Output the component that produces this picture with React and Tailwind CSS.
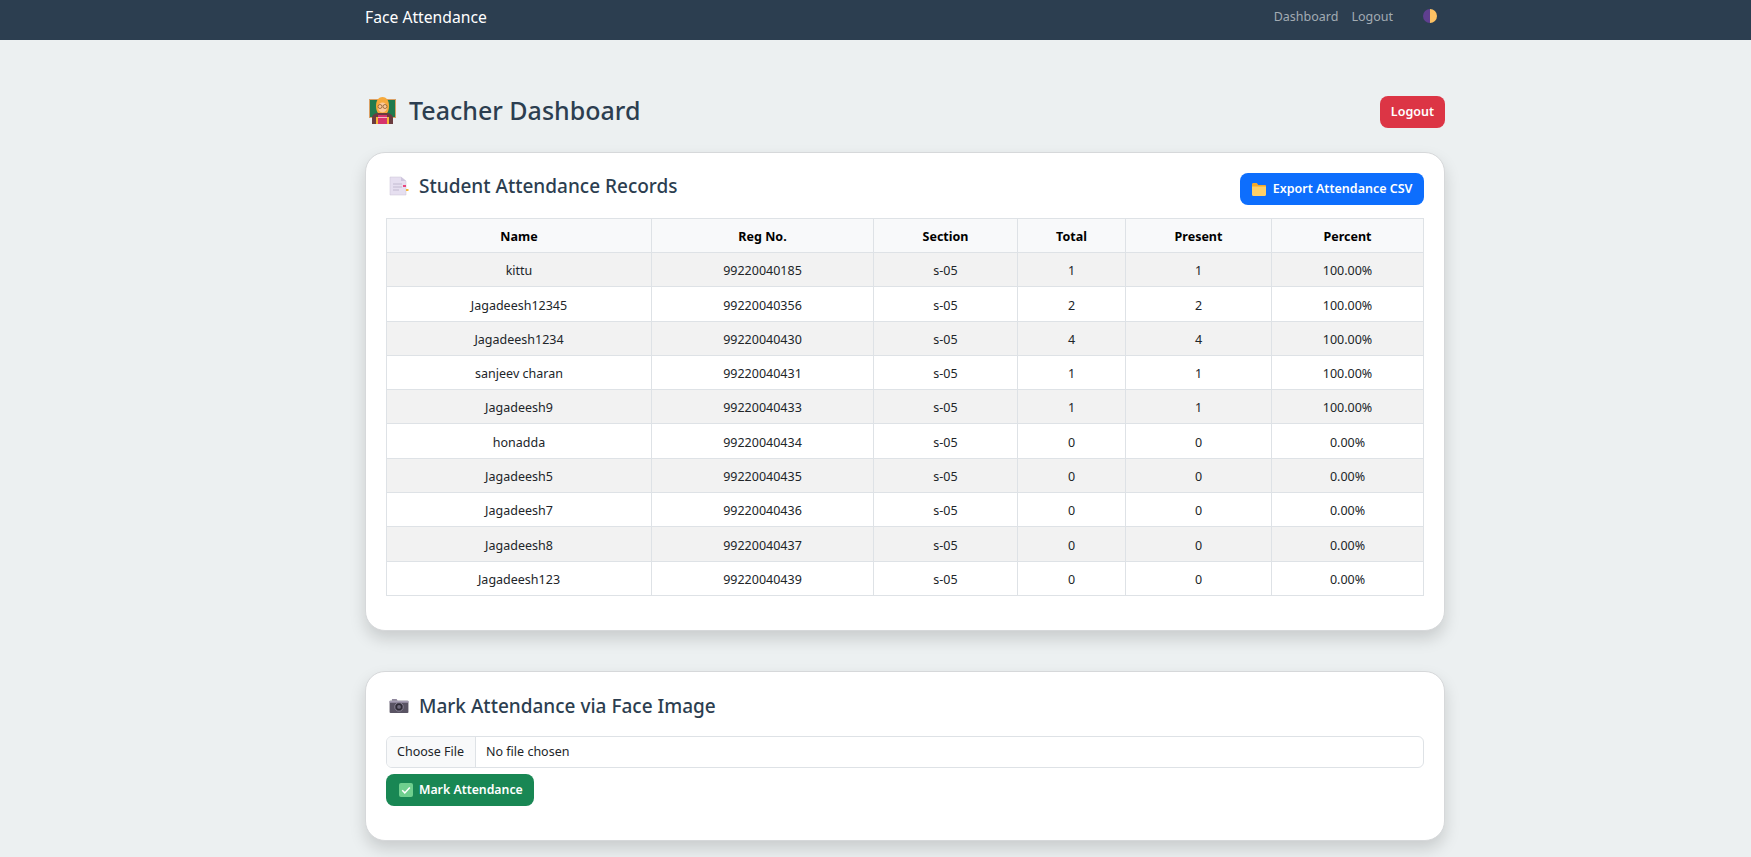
const rows = [
  ["kittu", "99220040185", "s-05", 1, 1, "100.00%"],
  ["Jagadeesh12345", "99220040356", "s-05", 2, 2, "100.00%"],
  ["Jagadeesh1234", "99220040430", "s-05", 4, 4, "100.00%"],
  ["sanjeev charan", "99220040431", "s-05", 1, 1, "100.00%"],
  ["Jagadeesh9", "99220040433", "s-05", 1, 1, "100.00%"],
  ["honadda", "99220040434", "s-05", 0, 0, "0.00%"],
  ["Jagadeesh5", "99220040435", "s-05", 0, 0, "0.00%"],
  ["Jagadeesh7", "99220040436", "s-05", 0, 0, "0.00%"],
  ["Jagadeesh8", "99220040437", "s-05", 0, 0, "0.00%"],
  ["Jagadeesh123", "99220040439", "s-05", 0, 0, "0.00%"],
];

const headers = ["Name", "Reg No.", "Section", "Total", "Present", "Percent"];

function TeacherIcon() {
  return (
    <svg width="27" height="27" viewBox="0 0 27 27" className="shrink-0">
      <rect x="0" y="2" width="27" height="19" fill="#d9a066" />
      <rect x="1" y="3" width="25" height="17" fill="#1f7a4d" />
      <path d="M3 27v-6c0-3 3-5 7-5h7c4 0 7 2 7 5v6z" fill="#6a3b3f" />
      <path d="M7 20h13v7H7z" fill="#f9b233" />
      <path d="M9 18h9v9H9z" fill="#d6336c" />
      <path d="M9 20h9v1H9z" fill="#f3b5c8" />
      <path d="M7 9c0-6 3-9 6.500-9S20 3 20 9c0 3-1 6-2 7H9c-1-1-2-4-2-7z" fill="#f6a93b" />
      <ellipse cx="13.500" cy="10.500" rx="4.500" ry="5" fill="#fbc99a" />
      <circle cx="11" cy="9.500" r="2" fill="none" stroke="#8a5a2b" strokeWidth="0.800" />
      <circle cx="16" cy="9.500" r="2" fill="none" stroke="#8a5a2b" strokeWidth="0.800" />
    </svg>
  );
}

function NotesIcon() {
  return (
    <svg width="20" height="20" viewBox="0 0 20 20" className="shrink-0">
      <path d="M1 1h11l5 4v14H1z" fill="#e6dff0" stroke="#c9c2d6" strokeWidth="0.500" />
      <path d="M12 1l5 4h-5z" fill="#cfc6de" />
      <path d="M4 8h9M4 11h9M4 14h6" stroke="#c2bad0" strokeWidth="1" />
      <rect x="14" y="9" width="3" height="2" fill="#e8467c" />
      <rect x="17" y="13" width="2.500" height="2" fill="#f5b83d" />
    </svg>
  );
}

function FolderIcon() {
  return (
    <svg width="14" height="13" viewBox="0 0 14 13" className="shrink-0">
      <path d="M0 1.500C0 .7.500 0 1.300 0h3.500l1.500 2H13c.6 0 1 .4 1 1v2H0z" fill="#f4a92b" />
      <path d="M0 3.500h14v8.300c0 .7-.5 1.200-1.200 1.200H1.200C.5 13 0 12.500 0 11.800z" fill="#ffd067" />
    </svg>
  );
}

function CameraIcon() {
  return (
    <svg width="20" height="16" viewBox="0 0 21 17" className="shrink-0">
      <path d="M3 1h5l1 2H3z" fill="#8f879c" />
      <rect x="0.500" y="3" width="20" height="13" rx="1" fill="#5a5464" />
      <rect x="0.500" y="3" width="20" height="2" fill="#a49cb2" />
      <circle cx="10.500" cy="9.500" r="4.500" fill="#2e2a35" stroke="#8f879c" strokeWidth="1" />
      <circle cx="10.500" cy="9.500" r="2" fill="#6f6a7c" />
    </svg>
  );
}

function CheckIcon() {
  return (
    <svg width="14" height="14" viewBox="0 0 14 14" className="shrink-0">
      <rect width="14" height="14" rx="2" fill="#6fcf8e" />
      <path d="M3.200 7.300l2.600 2.600 5-5.400" fill="none" stroke="#ffffff" strokeWidth="1.500" />
    </svg>
  );
}

function ThemeIcon() {
  return (
    <svg width="14" height="14" viewBox="0 0 14 14">
      <path d="M7 0a7 7 0 0 0 0 14z" fill="#5f3f8f" />
      <path d="M7 0a7 7 0 0 1 0 14z" fill="#fdc163" />
    </svg>
  );
}

export default function App() {
  return (
    <div className="min-h-screen bg-[#ecf0f1] font-['Noto_Sans','Open_Sans',sans-serif] text-[#212529]">
      <nav className="h-10 bg-[#2c3e50]">
        <div className="ml-[365px] flex h-full w-[1080px] items-center justify-between pb-[5px]">
          <span className="text-[15.700px] text-white">Face Attendance</span>
          <div className="flex items-center pr-2 text-[12.500px] text-[#a2abb3]">
            <span>Dashboard</span>
            <span className="ml-[13px]">Logout</span>
            <span className="ml-[30px] flex pb-[3px]"><ThemeIcon /></span>
          </div>
        </div>
      </nav>

      <main className="ml-[365px] w-[1080px] pt-[56px]">
        <div className="flex items-center justify-between pb-[24px]">
          <h1 className="-mt-[4px] flex items-center gap-[13px] pl-[4px] text-[25px] leading-[32px] font-medium text-[#2c3e50]">
            <TeacherIcon />
            Teacher Dashboard
          </h1>
          <button className="h-8 rounded-lg bg-[#dc3545] px-[11px] text-[12.500px] font-semibold text-white">
            Logout
          </button>
        </div>

        <section className="mb-[40px] rounded-[20px] border border-[#d6d8da] bg-white px-5 pt-[21px] pb-[34px] shadow-[0_8px_16px_rgba(0,0,0,0.15)]">
          <div className="flex items-start justify-between pb-[13px]">
            <h2 className="flex items-center gap-[10px] pl-[3px] text-[19px] leading-[24px] font-medium text-[#2c3e50]">
              <NotesIcon />
              Student Attendance Records
            </h2>
            <button className="-mt-px flex h-8 items-center gap-[7px] rounded-lg bg-[#0d6efd] px-[11.500px] text-[12.500px] font-semibold text-white">
              <FolderIcon />
              Export Attendance CSV
            </button>
          </div>

          <table className="w-[1037px] table-fixed border-collapse text-center text-[12.500px]">
            <colgroup>
              <col className="w-[265px]" />
              <col className="w-[222px]" />
              <col className="w-[144px]" />
              <col className="w-[108px]" />
              <col className="w-[146px]" />
              <col className="w-[152px]" />
            </colgroup>
            <thead>
              <tr className="h-[34px] bg-[#f8f9fa] text-black">
                {headers.map((h) => (
                  <th key={h} className="border border-[#dee2e6] pt-[3px] font-bold">{h}</th>
                ))}
              </tr>
            </thead>
            <tbody>
              {rows.map((row, i) => (
                <tr key={row[1]} className={i % 2 === 0 ? "h-[34.300px] bg-[#f2f2f2]" : "h-[34.300px] bg-white"}>
                  {row.map((cell, j) => (
                    <td key={j} className="border border-[#dee2e6] pt-[4px]">{cell}</td>
                  ))}
                </tr>
              ))}
            </tbody>
          </table>
        </section>

        <section className="rounded-[20px] border border-[#d6d8da] bg-white px-5 pt-[22px] pb-[34px] shadow-[0_8px_16px_rgba(0,0,0,0.15)]">
          <h2 className="flex items-center gap-[10px] pl-[3px] text-[19px] leading-[24px] font-medium text-[#2c3e50]">
            <CameraIcon />
            Mark Attendance via Face Image
          </h2>
          <div className="mt-[18px] flex h-8 items-center overflow-hidden rounded-md border border-[#dee2e6] text-[12.500px]">
            <span className="flex h-full items-center border-r border-[#dee2e6] bg-[#f8f9fa] pr-[11px] pl-[10px]">Choose File</span>
            <span className="px-[10px]">No file chosen</span>
          </div>
          <button className="mt-[6px] flex h-8 items-center gap-[6px] rounded-lg bg-[#198754] pr-[11px] pl-[13px] text-[12.300px] font-semibold text-white">
            <CheckIcon />
            Mark Attendance
          </button>
        </section>
      </main>
    </div>
  );
}
